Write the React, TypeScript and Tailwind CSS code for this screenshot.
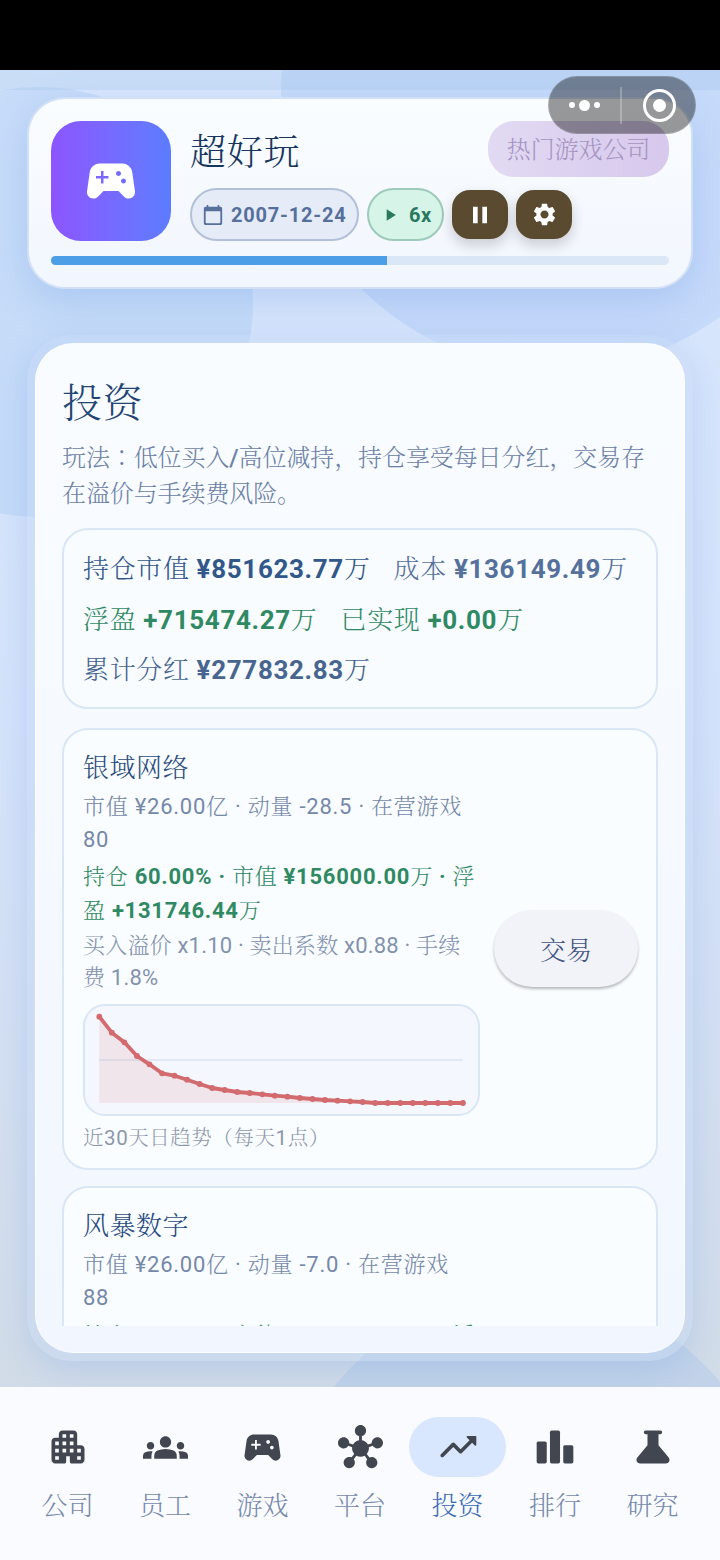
import type { ReactNode } from 'react';
import { MdGroups, MdHub, MdPause, MdPlayArrow, MdSettings, MdSportsEsports } from 'react-icons/md';

const icons = {
    apartment:
        'M17 11V5c0-1.1-.9-2-2-2H9c-1.1 0-2 .9-2 2v2H5c-1.1 0-2 .9-2 2v10c0 1.1.9 2 2 2h5c.55 0 1-.45 1-1v-3h2v3c0 .55.45 1 1 1h5c1.1 0 2-.9 2-2v-6c0-1.1-.9-2-2-2h-2zM7 19H5v-2h2v2zm0-4H5v-2h2v2zm0-4H5V9h2v2zm4 4H9v-2h2v2zm0-4H9V9h2v2zm0-4H9V5h2v2zm4 8h-2v-2h2v2zm0-4h-2V9h2v2zm0-4h-2V5h2v2zm4 12h-2v-2h2v2zm0-4h-2v-2h2v2z',
    trending:
        'M16.85 6.85l1.44 1.44-4.88 4.88-3.29-3.29a.996.996 0 0 0-1.41 0l-6 6.01c-.39.39-.39 1.02 0 1.41.39.39 1.02.39 1.41 0L9.41 12l3.29 3.29c.39.39 1.02.39 1.41 0l5.59-5.58 1.44 1.44c.31.31.85.09.85-.35V6.5c.01-.28-.21-.5-.49-.5h-4.29c-.45 0-.67.54-.36.85z',
    science:
        'M20.54 17.73L15 11V5h1c.55 0 1-.45 1-1s-.45-1-1-1H8c-.55 0-1 .45-1 1s.45 1 1 1h1v6l-5.54 6.73C2.36 19.04 3.29 21 5 21h14c1.71 0 2.64-1.96 1.54-3.27z',
    calendar:
        'M20 3h-1V2c0-.55-.45-1-1-1s-1 .45-1 1v1H7V2c0-.55-.45-1-1-1s-1 .45-1 1v1H4c-1.1 0-2 .9-2 2v16c0 1.1.9 2 2 2h16c1.1 0 2-.9 2-2V5c0-1.1-.9-2-2-2zm-1 18H5c-.55 0-1-.45-1-1V8h16v12c0 .55-.45 1-1 1z',
};

function Icon({ d, size = 44 }: { d: string; size?: number }) {
    return (
        <svg width={size} height={size} viewBox="0 0 24 24" fill="currentColor" aria-hidden="true">
            <path d={d} />
        </svg>
    );
}

function BarsIcon() {
    return (
        <svg width={44} height={44} viewBox="0 0 24 24" fill="currentColor" aria-hidden="true">
            <rect x="2" y="9" width="5.5" height="12" rx="0.9" />
            <rect x="9.25" y="3" width="5.5" height="18" rx="0.9" />
            <rect x="16.5" y="11" width="5.5" height="10" rx="0.9" />
        </svg>
    );
}

/** Chiffres et ponctuation latine en graisse normale, le chinois reste en light */
function Mixed({ text }: { text: string }) {
    return text.split(/([\x20-\x7e¥·]+)/).map((part, i) =>
        i % 2 ? (
            <span key={i} className="font-normal">
                {part}
            </span>
        ) : (
            part
        ),
    );
}

const tabs: { label: string; icon: ReactNode; active?: boolean }[] = [
    { label: '公司', icon: <Icon d={icons.apartment} /> },
    { label: '员工', icon: <MdGroups size={45} /> },
    { label: '游戏', icon: <MdSportsEsports size={45} /> },
    { label: '平台', icon: <MdHub size={45} /> },
    { label: '投资', icon: <Icon d={icons.trending} />, active: true },
    { label: '排行', icon: <BarsIcon /> },
    { label: '研究', icon: <Icon d={icons.science} /> },
];

// 30 jours, du plus ancien au plus récent (hauteur dans le graphique)
const trend = [
    10.7, 26.7, 36.3, 50, 58.3, 67.3, 69.7, 73.7, 78, 82, 84, 86, 87, 88.3, 89.7, 90.7, 92, 93, 94, 94.7, 95.3, 96, 97,
    97, 97, 97, 97, 97, 97, 97,
];

function Backdrop() {
    return (
        <div className="absolute inset-x-0 top-[70px] h-[1317px] overflow-hidden bg-linear-to-b from-[#d9e7fd] via-[#d5e3fb] to-[#d2dce8]">
            <div className="absolute top-[17px] -left-[177px] size-[430px] rounded-full bg-[#90bcf0]/24" />
            <div className="absolute -top-[252px] left-[281px] size-[552px] rounded-full bg-[#90b8f2]/25" />
            <div className="absolute top-[1222px] left-[281px] size-[496px] rounded-full bg-[#a5c2ea]/35" />
            <div className="absolute inset-x-0 top-0 h-5 bg-[#9cbfe8]/25" />
        </div>
    );
}

/** Capsule système en haut à droite */
function Capsule() {
    return (
        <div className="absolute top-[76px] left-[548px] z-20 flex h-[58px] w-[148px] items-center rounded-full border border-white/15 bg-black/40">
            <div className="flex w-[71px] items-center justify-center gap-1">
                <span className="size-[6px] rounded-full bg-white" />
                <span className="size-[11px] rounded-full bg-white" />
                <span className="size-[6px] rounded-full bg-white" />
            </div>
            <span className="h-[37px] w-[1.5px] bg-white/25" />
            <div className="flex flex-1 justify-center pl-[2px]">
                <span className="flex size-[33px] items-center justify-center rounded-full border-[3px] border-white">
                    <span className="size-[13px] rounded-full bg-white" />
                </span>
            </div>
        </div>
    );
}

function Header() {
    return (
        <header className="mx-[27px] h-[192px] rounded-[38px] border-2 border-[#d2e0f6] bg-linear-to-b from-[#fafdff] to-[#f2f6fe] px-[22px] pt-[22px] shadow-[0_12px_36px_rgba(90,140,225,0.25)]">
            <div className="flex">
                <div className="flex size-[120px] items-center justify-center rounded-[30px] bg-linear-to-r from-[#8b55ff] to-[#5b7cff] text-white">
                    <MdSportsEsports size={60} />
                </div>
                <div className="ml-[19px] flex-1">
                    <div className="flex h-[56px] justify-between">
                        <h1 className="pt-[4px] text-[36px] leading-[56px] tracking-[0.8px] text-[#17375e]">超好玩</h1>
                        <span className="h-[56px] w-[181px] rounded-[26px] bg-linear-to-r from-[#e2daf3] to-[#d7c8ec] pt-px text-center text-[24px] leading-[56px] tracking-[-0.1px] text-[#a594c2]">
                            热门游戏公司
                        </span>
                    </div>
                    <div className="mt-[11px] flex items-start gap-2">
                        <div className="flex h-[53px] w-[169px] items-center gap-[7px] rounded-full border-2 border-[#b2c0d8] bg-[#e5ecf8] pl-[10px] text-[#56709b]">
                            <Icon d={icons.calendar} size={22} />
                            <span className="text-[20px] font-bold tracking-[0.8px]">2007-12-24</span>
                        </div>
                        <div className="flex h-[53px] w-[77px] items-center gap-[9px] rounded-full border-2 border-[#9dcab9] bg-[#d6f4e8] pl-[11px] text-[#29795f]">
                            <MdPlayArrow size={20} />
                            <span className="text-[20px] font-bold tracking-[0.5px]">6x</span>
                        </div>
                        <button className="mt-[2px] flex h-[49px] w-[56px] items-center justify-center rounded-[18px] bg-[#5a4a2f] text-white shadow-[0_6px_14px_rgba(0,0,0,0.18)]">
                            <MdPause size={28} />
                        </button>
                        <button className="mt-[2px] flex h-[49px] w-[56px] items-center justify-center rounded-[18px] bg-[#5a4a2f] text-white shadow-[0_6px_14px_rgba(0,0,0,0.18)]">
                            <MdSettings size={27} />
                        </button>
                    </div>
                </div>
            </div>
            <div className="mt-[14.5px] h-[9.5px] overflow-hidden rounded-full bg-[#d9e7f6]">
                <div className="h-full w-[54.3%] bg-[#4c9fe6]" />
            </div>
        </header>
    );
}

function TrendChart() {
    const points = trend.map((y, i) => [14.3 + i * 12.54, y]);
    const line = points.map(([x, y]) => `${x},${y}`).join(' ');
    const last = points[points.length - 1][0];
    return (
        <div className="mt-[10px] h-[112px] rounded-[22px] border-2 border-[#dbe6f5] bg-[#f4f7fd]">
            <svg width={393} height={108} viewBox="0 0 393 108">
                <line x1="14.3" y1="54" x2={last} y2="54" stroke="#dde5f1" strokeWidth="1.6" />
                <polygon points={`14.3,97 ${line} ${last},97`} fill="#d96c70" fillOpacity="0.13" />
                <polyline points={line} fill="none" stroke="#d26a6e" strokeWidth="3.8" strokeLinejoin="round" />
                {points.map(([x, y]) => (
                    <circle key={x} cx={x} cy={y} r="2.9" fill="#d26a6e" />
                ))}
            </svg>
        </div>
    );
}

function Summary() {
    return (
        <section className="mt-[16px] h-[181px] rounded-[26px] border-2 border-[#d9e6f5] bg-[#f8fcff] px-[19px] pt-[14px] text-[26px] leading-[50.5px] tracking-[0.65px] whitespace-nowrap">
            <div className="flex gap-[23px]">
                <span className="text-[#325789]">持仓市值 <b>¥851623.77</b>万</span>
                <span className="text-[#55709b]">成本 <b>¥136149.49</b>万</span>
            </div>
            <div className="flex gap-[23px] text-[#2f8a63]">
                <span>浮盈 <b>+715474.27</b>万</span>
                <span>已实现 <b>+0.00</b>万</span>
            </div>
            <div className="text-[#47658f]">累计分红 <b>¥277832.83</b>万</div>
        </section>
    );
}

type StockProps = { name: string; momentum: string; games: string; children: ReactNode; className: string };

function Stock({ name, momentum, games, children, className }: StockProps) {
    return (
        <article className={`flex rounded-[26px] border-2 border-[#d9e6f5] bg-[#fafdff] px-[19px] pt-[20px] ${className}`}>
            <div className="w-[397px] shrink-0 text-[22px] tracking-[0.75px] whitespace-nowrap">
                <h3 className="text-[26px] leading-[36px] tracking-[0.5px] text-[#2b4c7e]">{name}</h3>
                <p className="mt-[5px] leading-[32.5px] text-[#7588a8]">
                    <Mixed text={`市值 ¥26.00亿 · 动量 ${momentum} · 在营游戏`} />
                    <br />
                    <Mixed text={games} />
                </p>
                {children}
            </div>
        </article>
    );
}

function Investments() {
    return (
        <main className="mx-[27px] mt-[46px] h-[1026px] rounded-[44px] bg-[#c3d6f4]/40 p-[8px] shadow-[0_10px_32px_rgba(90,140,220,0.22)]">
            <div className="h-[1010px] rounded-[38px] border border-white/60 bg-linear-to-b from-[#f9fcff] to-[#f2f6fe] px-[26px] pt-[30px]">
                <h2 className="text-[40px] leading-[60px] tracking-[0.8px] text-[#234573]">投资</h2>
                <p className="mt-[4px] text-[24px] leading-[36px] tracking-[-0.1px] whitespace-nowrap text-[#6c81a6]">
                    玩法<span lang="ja" className="font-['Noto_Serif_CJK_JP','Noto_Sans_CJK_JP',serif]">：</span>低位买入
                    <span className="font-medium">/</span>高位减持，持仓享受每日分红，交易存
                    <br />
                    在溢价与手续费风险。
                </p>
                <div className="h-[813.5px] overflow-hidden">
                    <Summary />
                    <div className="relative">
                        <Stock name="银域网络" momentum="-28.5" games="80" className="mt-[19px] h-[442px]">
                            <p className="mt-[4px] leading-[34px] text-[#2f8a63]">
                                持仓 <b>60.00%</b> <b>·</b> 市值 <b>¥156000.00</b>万 <b>·</b> 浮
                                <br />盈 <b>+131746.44</b>万
                            </p>
                            <p className="mt-[2px] leading-[32px] tracking-[0.2px] text-[#8292ad]">
                                <Mixed text="买入溢价 x1.10 · 卖出系数 x0.88 · 手续" />
                                <br />
                                <Mixed text="费 1.8%" />
                            </p>
                            <TrendChart />
                            <p className="mt-[7px] text-[20.5px] leading-[30px] tracking-[0.55px] text-[#8c97aa]">
                                <Mixed text="近30天日趋势（每天1点）" />
                            </p>
                        </Stock>
                        <button className="absolute top-[182px] right-[20px] h-[77px] w-[144px] rounded-full bg-[#f2f3f9] pt-[5px] text-[26px] text-[#42557f] shadow-[0_2px_3px_rgba(0,0,0,0.28)]">
                            交易
                        </button>
                    </div>
                    <Stock name="风暴数字" momentum="-7.0" games="88" className="mt-[16px] h-[442px]">
                        <p className="mt-[5px] leading-[34px] text-[#2f8a63]">
                            持仓 <b>60.00%</b> <b>·</b> 市值 <b>¥156000.00</b>万 <b>·</b> 浮
                        </p>
                    </Stock>
                </div>
            </div>
        </main>
    );
}

function TabBar() {
    return (
        <nav className="mt-auto flex h-[173px] bg-[#fafbff] px-[18.75px] pt-[30px]">
            {tabs.map((tab) => (
                <a key={tab.label} className="flex flex-1 flex-col items-center">
                    <span
                        className={`flex h-[60px] w-full items-center justify-center rounded-full text-[#424650] ${tab.active ? 'bg-[#d8e7fe]' : ''}`}
                    >
                        {tab.icon}
                    </span>
                    <span
                        className={`mt-[10px] text-[26px] leading-[38px] ${tab.active ? 'text-[#3b6ab8]' : 'text-[#778aac]'}`}
                    >
                        {tab.label}
                    </span>
                </a>
            ))}
        </nav>
    );
}

export default function App() {
    return (
        <div className="relative h-[1560px] w-[720px] overflow-hidden bg-[#fafbff] font-[Roboto,'Noto_Serif_CJK_SC','Noto_Sans_CJK_SC',sans-serif] font-light [&_b]:font-bold">
            <Backdrop />
            <div className="relative z-10 flex h-full flex-col">
                <div className="mb-[27px] h-[70px] shrink-0 bg-black" />
                <Header />
                <Investments />
                <TabBar />
            </div>
            <Capsule />
        </div>
    );
}
